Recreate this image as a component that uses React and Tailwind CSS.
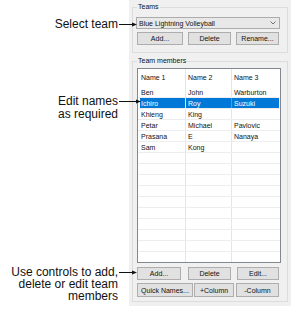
import React from "react";

function Arrow({ w }) {
  return (
    <svg width={w} height="7" viewBox={`0 0 ${w} 7`} className="relative z-10 shrink-0 overflow-visible">
      <line x1="0" y1="3.5" x2={w - 3} y2="3.5" stroke="#111" strokeWidth="1" />
      <polygon points={`${w - 5},1.5 ${w},3.5 ${w - 5},5.5`} fill="#111" />
    </svg>
  );
}

function Btn({ w, children, h = "h-[13px]" }) {
  return (
    <div className={`${w} ${h} border border-[#adadad] bg-[#e1e1e1] flex items-center justify-center leading-none text-[#111] whitespace-nowrap`}>
      {children}
    </div>
  );
}

const rows = [
  ["Ben", "John", "Warburton"],
  ["Ichiro", "Roy", "Suzuki", true],
  ["Khieng", "King", ""],
  ["Petar", "Michael", "Pavlovic"],
  ["Prasana", "E", "Nanaya"],
  ["Sam", "Kong", ""],
  ["", "", ""],
  ["", "", ""],
  ["", "", ""],
  ["", "", ""],
  ["", "", ""],
  ["", "", ""],
  ["", "", ""],
  ["", "", ""],
  ["", "", ""],
  ["", "", ""],
];

export default function App() {
  return (
    <div className="w-[299px] h-[323px] bg-white flex font-['Liberation_Sans',Arial,sans-serif] text-black overflow-hidden">
      {/* annotations */}
      <div className="w-[129px] shrink-0 flex flex-col text-[12px] leading-[14px] text-[#111]">
        <div className="mt-[17px] h-[14px] flex items-center w-[137px]">
          <span className="w-[119px] text-right pr-[1px]">Select team</span>
          <Arrow w={18} />
        </div>
        <div className="mt-[64px] flex items-start w-[141px]">
          <div className="w-[119px] text-right leading-[13px] pr-[1px]">
            Edit names
            <br />
            as required
          </div>
          <div className="h-[13px] flex items-center">
            <Arrow w={22} />
          </div>
        </div>
        <div className="mt-[145px] flex items-start w-[137px]">
          <div className="w-[119px] text-right leading-[12px] pr-[1px]">
            Use controls to add,
            <br />
            delete or edit team
            <br />
            members
          </div>
          <div className="h-[12px] flex items-center">
            <Arrow w={18} />
          </div>
        </div>
      </div>

      {/* dialog panel */}
      <div className="w-[162px] h-[306px] shrink-0 bg-[#f0f0f0] px-[3px] pt-[2px] text-[7px] text-[#111]">
        <fieldset className="border border-[#dcdcdc] w-[156px]">
          <legend className="ml-[4px] px-[1px] leading-[10px]">Teams</legend>
          <div className="pt-[5px] pb-[7px] pl-[3px]">
            <div className="w-[144px] h-[12px] border border-[#acacac] bg-[#e8e8e8] flex items-center justify-between pl-[2px] pr-[3px]">
              <span className="leading-none">Blue Lightning Volleyball</span>
              <svg width="6" height="4" viewBox="0 0 6 4">
                <polyline points="0.5,0.5 3,3 5.5,0.5" fill="none" stroke="#555" strokeWidth="0.8" />
              </svg>
            </div>
            <div className="mt-[3px] flex pl-[1px]">
              <Btn w="w-[46px]">Add...</Btn>
              <div className="w-[5px]" />
              <Btn w="w-[43px]">Delete</Btn>
              <div className="w-[5px]" />
              <Btn w="w-[43px]">Rename...</Btn>
            </div>
          </div>
        </fieldset>

        <fieldset className="border border-[#dcdcdc] w-[156px] mt-[3px]">
          <legend className="ml-[4px] px-[1px] leading-[10px]">Team members</legend>
          <div className="pt-[2px] pb-[4px] pl-[4px]">
            <div className="w-[144px] h-[195px] border border-[#828790] bg-white overflow-hidden flex flex-col">
              <div className="h-[18px] shrink-0 flex">
                <div className="w-[48px] border-r border-[#e5e5e5] pl-[3px] flex items-center">Name 1</div>
                <div className="w-[46px] border-r border-[#e5e5e5] pl-[2px] flex items-center">Name 2</div>
                <div className="flex-1 pl-[2px] flex items-center">Name 3</div>
              </div>
              {rows.map((r, i) => (
                <div
                  key={i}
                  className={`h-[11px] shrink-0 flex border-b border-[#ededed] ${r[3] ? "bg-[#0078d7] text-white" : ""}`}
                >
                  <div className={`w-[48px] border-r border-[#e5e5e5] flex items-center leading-none ${r[3] ? "border-l-[2px] border-l-white pl-[1px]" : "pl-[3px]"}`}>{r[0]}</div>
                  <div className={`w-[46px] border-r ${r[3] ? "border-[#4a9be0]" : "border-[#e5e5e5]"} pl-[2px] flex items-center leading-none`}>{r[1]}</div>
                  <div className={`flex-1 pl-[2px] flex items-center leading-none ${r[3] ? "border-r border-r-white" : ""}`}>{r[2]}</div>
                </div>
              ))}
            </div>
            <div className="mt-[4px] flex">
              <Btn w="w-[44px]">Add...</Btn>
              <div className="w-[7px]" />
              <Btn w="w-[43px]">Delete</Btn>
              <div className="w-[6px]" />
              <Btn w="w-[42px]">Edit...</Btn>
            </div>
            <div className="mt-[3px] flex">
              <Btn w="w-[56px]" h="h-[14px]">Quick Names...</Btn>
              <div className="w-[1px]" />
              <Btn w="w-[40px]" h="h-[14px]">+Column</Btn>
              <div className="w-[2px]" />
              <Btn w="w-[43px]" h="h-[14px]">-Column</Btn>
            </div>
          </div>
        </fieldset>
      </div>
    </div>
  );
}
